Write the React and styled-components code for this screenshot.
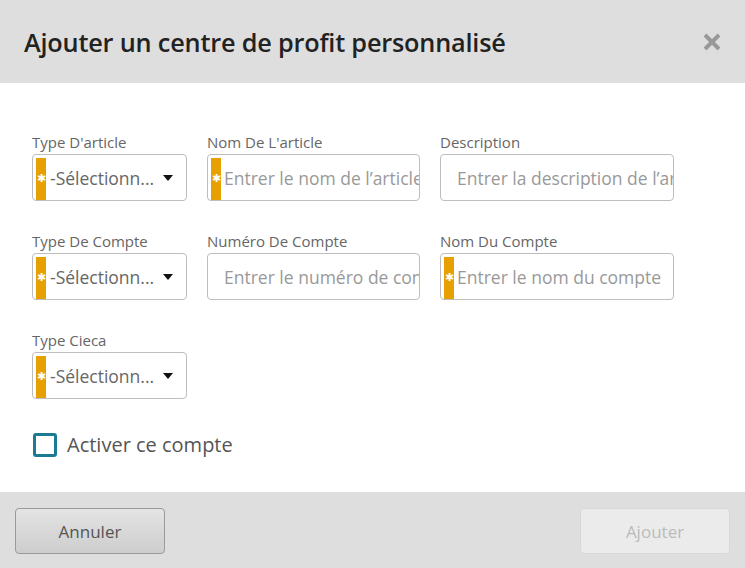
import React from 'react';
import styled, { createGlobalStyle } from 'styled-components';

const Global = createGlobalStyle`
  html, body { margin: 0; padding: 0; background: #fff; }
  body { font-family: "Open Sans", "Liberation Sans", sans-serif; }
  * { box-sizing: border-box; }
`;

const Dialog = styled.div`
  width: 745px;
  height: 568px;
  display: flex;
  flex-direction: column;
`;

const Header = styled.div`
  flex: 0 0 83px;
  background: #dedede;
  display: flex;
  align-items: center;
  justify-content: space-between;
  padding: 0 22px 0 24px;
`;

const Title = styled.h1`
  margin: 0;
  font-size: 26px;
  font-weight: 600;
  color: #222;
  letter-spacing: -0.2px;
  white-space: nowrap;
  transform: scaleX(0.972);
  transform-origin: left center;
`;

const Close = styled.button`
  border: none;
  background: none;
  padding: 0;
  width: 22px;
  height: 22px;
  cursor: pointer;
`;

const Body = styled.div`
  flex: 1;
  background: #fff;
  padding: 49px 0 0 32px;
`;

const Grid = styled.div`
  display: grid;
  grid-template-columns: 155px 213px 234px;
  column-gap: 20px;
  row-gap: 30px;
`;

const Field = styled.div`
  display: flex;
  flex-direction: column;
  gap: 2px;
`;

const Label = styled.label`
  font-size: 15px;
  color: #666;
  line-height: 20px;
`;

const Box = styled.div`
  position: relative;
  height: 47px;
  border: 1px solid #bdbdbd;
  border-radius: 4px;
  background: #fff;
  display: flex;
  align-items: center;
  overflow: hidden;
  padding-left: ${p => (p.$select ? '17px' : '16px')};
  padding-right: ${p => (p.$select ? '10px' : '0')};
`;

const Required = styled.span`
  position: absolute;
  left: 3px;
  top: 3px;
  bottom: 0;
  width: 10px;
  background: #e6a100;
  display: flex;
  align-items: center;
  justify-content: center;
  color: #fff;
  font-size: 11px;
  line-height: 1;
  padding-bottom: 4px;
`;

const Input = styled.input`
  border: none;
  outline: none;
  background: transparent;
  font-family: inherit;
  font-size: 17.5px;
  color: #555;
  width: 100%;
  padding: 0;
  &::placeholder { color: #999; }
`;

const SelectText = styled.span`
  flex: 1;
  font-size: 17.5px;
  color: #666;
  white-space: nowrap;
`;

const Caret = styled.span`
  width: 0;
  height: 0;
  border-left: 5px solid transparent;
  border-right: 5px solid transparent;
  border-top: 6px solid #111;
  margin-right: 3px;
`;

const CheckRow = styled.label`
  display: flex;
  align-items: center;
  gap: 10px;
  margin-top: 32px;
  font-size: 20px;
  color: #555;
`;

const Check = styled.span`
  width: 24px;
  height: 24px;
  border: 3px solid #1b7b95;
  border-radius: 3px;
  margin-left: 1px;
`;

const Footer = styled.div`
  flex: 0 0 76px;
  background: #dedede;
  display: flex;
  align-items: center;
  justify-content: space-between;
  padding: 0 15px;
`;

const Button = styled.button`
  width: 150px;
  height: 46px;
  border-radius: 4px;
  font-family: inherit;
  font-size: 17px;
  border: 1px solid ${p => (p.$disabled ? '#d8d8d8' : '#9a9a9a')};
  background: ${p => (p.$disabled ? '#ebebeb' : 'linear-gradient(#e4e4e4, #cdcdcd)')};
  color: ${p => (p.$disabled ? '#bbb' : '#555')};
  margin-top: 2px;
`;

const Select = ({ required }) => (
  <Box $select>
    {required && <Required>✱</Required>}
    <SelectText>-Sélectionn...</SelectText>
    <Caret />
  </Box>
);

const TextField = ({ required, placeholder }) => (
  <Box>
    {required && <Required>✱</Required>}
    <Input placeholder={placeholder} />
  </Box>
);

export default function App() {
  return (
    <Dialog>
      <Global />
      <Header>
        <Title>Ajouter un centre de profit personnalisé</Title>
        <Close aria-label="Fermer">
          <svg width="22" height="22" viewBox="0 0 22 22">
            <path d="M4 4 L18 18 M18 4 L4 18" stroke="#999" strokeWidth="4" strokeLinecap="butt" />
          </svg>
        </Close>
      </Header>
      <Body>
        <Grid>
          <Field>
            <Label>Type D'article</Label>
            <Select required />
          </Field>
          <Field>
            <Label>Nom De L'article</Label>
            <TextField required placeholder="Entrer le nom de l’article" />
          </Field>
          <Field>
            <Label>Description</Label>
            <TextField placeholder="Entrer la description de l’article" />
          </Field>
          <Field>
            <Label>Type De Compte</Label>
            <Select required />
          </Field>
          <Field>
            <Label>Numéro De Compte</Label>
            <TextField placeholder="Entrer le numéro de compte" />
          </Field>
          <Field>
            <Label>Nom Du Compte</Label>
            <TextField required placeholder="Entrer le nom du compte" />
          </Field>
          <Field>
            <Label>Type Cieca</Label>
            <Select required />
          </Field>
        </Grid>
        <CheckRow>
          <Check />
          Activer ce compte
        </CheckRow>
      </Body>
      <Footer>
        <Button>Annuler</Button>
        <Button $disabled>Ajouter</Button>
      </Footer>
    </Dialog>
  );
}
